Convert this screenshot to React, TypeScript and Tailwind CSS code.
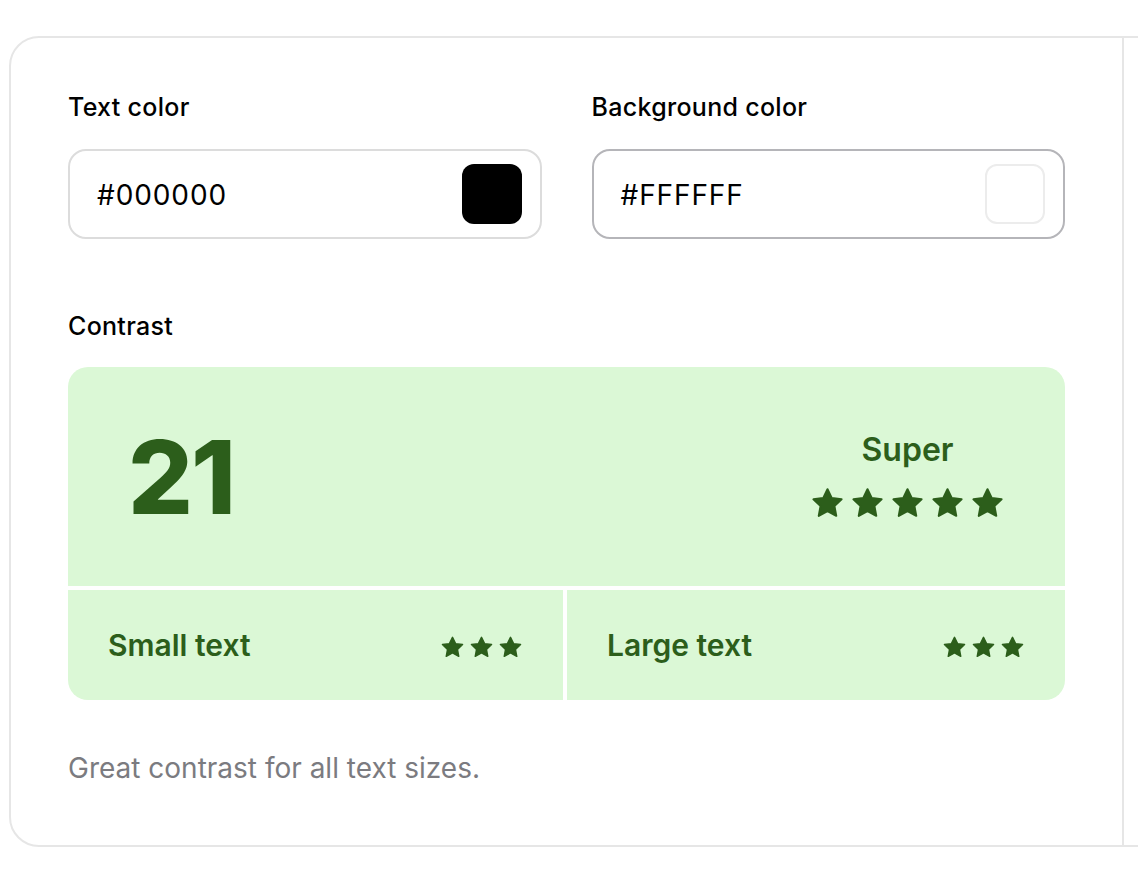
import React from 'react';

const Star: React.FC<{ size: number }> = ({ size }) => (
  <svg width={size} height={size} viewBox="0 0 24 24" className="shrink-0">
    <path
      d="M12 2.2l2.95 6.1 6.7.85-4.9 4.65 1.25 6.65L12 17.2l-6 3.25 1.25-6.65-4.9-4.65 6.7-.85L12 2.2z"
      fill="#2c5e1b"
      stroke="#2c5e1b"
      strokeWidth="1.4"
      strokeLinejoin="round"
    />
  </svg>
);

const Stars: React.FC<{ count: number; size: number; gap: string }> = ({ count, size, gap }) => (
  <div className={`flex ${gap}`}>
    {Array.from({ length: count }).map((_, i) => (
      <Star key={i} size={size} />
    ))}
  </div>
);

const ColorField: React.FC<{ label: string; value: string; swatch: 'black' | 'white'; focused?: boolean }> = ({
  label,
  value,
  swatch,
  focused,
}) => (
  <div className="flex flex-col">
    <label className="text-[25px] leading-[28px] font-medium text-black tracking-[0.3px] mb-[28px]">{label}</label>
    <div
      className={`h-[90px] rounded-[18px] border-2 flex items-center justify-between pl-[27px] pr-[18px] ${
        focused ? 'border-[#b5b5b9]' : 'border-[#dcdcdc]'
      }`}
    >
      <span className="text-[28px] text-black tracking-[0.9px] mt-[2px]">{value}</span>
      {swatch === 'black' ? (
        <div className="w-[60px] h-[60px] rounded-[12px] bg-black" />
      ) : (
        <div className="w-[60px] h-[60px] rounded-[12px] bg-white border-2 border-[#ececec]" />
      )}
    </div>
  </div>
);

const App: React.FC = () => {
  return (
    <div className="min-h-screen bg-white overflow-hidden pt-[36px] pl-[9px]" style={{ fontFamily: 'Inter, "Noto Sans", sans-serif' }}>
      <div className="w-[1400px] rounded-[30px] border-2 border-[#e6e6e6] flex">
        {/* Left panel */}
        <div className="w-[1113px] shrink-0 border-r-2 border-[#e6e6e6] px-[57px] pt-[55px] pb-[59px]">
          <div className="grid grid-cols-2 gap-[50px]">
            <ColorField label="Text color" value="#000000" swatch="black" />
            <ColorField label="Background color" value="#FFFFFF" swatch="white" focused />
          </div>

          <div className="mt-[73px] text-[25px] leading-[28px] font-medium tracking-[0.3px] text-black">Contrast</div>

          <div className="mt-[27px] rounded-[20px] overflow-hidden flex flex-col gap-[4px] text-[#2c5e1b]">
            <div className="h-[219px] bg-[#dbf8d6] flex items-center justify-between pl-[60px] pr-[60px]">
              <span className="text-[102px] leading-none font-extrabold tracking-[-2px]">21</span>
              <div className="flex flex-col items-center">
                <span className="text-[32px] leading-[36px] font-semibold">Super</span>
                <div className="mt-[18px]">
                  <Stars count={5} size={35} gap="gap-[5px]" />
                </div>
              </div>
            </div>
            <div className="grid grid-cols-[495px_1fr] gap-[4px]">
              <div className="h-[110px] bg-[#dbf8d6] flex items-center justify-between px-[40px]">
                <span className="text-[30px] font-semibold">Small text</span>
                <div className="mt-[4px]">
                  <Stars count={3} size={25} gap="gap-[4px]" />
                </div>
              </div>
              <div className="h-[110px] bg-[#dbf8d6] flex items-center justify-between px-[40px]">
                <span className="text-[30px] font-semibold">Large text</span>
                <div className="mt-[4px]">
                  <Stars count={3} size={25} gap="gap-[4px]" />
                </div>
              </div>
            </div>
          </div>

          <p className="mt-[50px] text-[28px] leading-[36px] text-[#7b7b80]">Great contrast for all text sizes.</p>
        </div>
        <div className="flex-1" />
      </div>
    </div>
  );
};

export default App;
